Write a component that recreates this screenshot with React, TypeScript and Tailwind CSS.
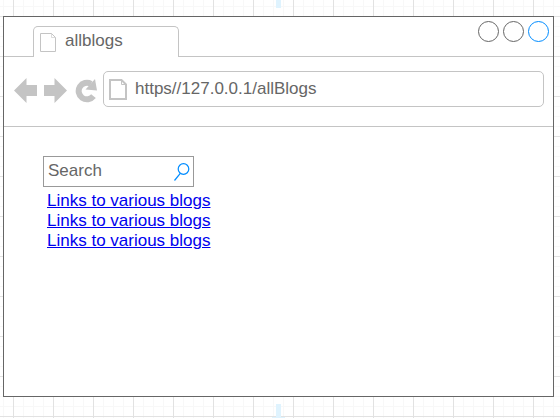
import React from "react";

const GRID =
  "bg-white bg-[linear-gradient(to_right,#e2e2e2_1px,transparent_1px),linear-gradient(to_bottom,#e2e2e2_1px,transparent_1px),linear-gradient(to_right,#f8f8f8_1px,transparent_1px),linear-gradient(to_bottom,#f8f8f8_1px,transparent_1px)] bg-[size:40px_40px,40px_40px,10px_10px,10px_10px] bg-[position:13px_16px,13px_16px,3px_6px,3px_6px]";

function PageIcon({ className, bold }: { className: string; bold?: boolean }) {
  return bold ? (
    <svg className={className} viewBox="0 0 18 21" fill="none" stroke="#c4c4c4" aria-hidden="true">
      <path d="M1 1H12.500L17 5.500V20H1Z" strokeWidth="2" />
      <path d="M12.500 1V5.500H17" strokeWidth="1" />
    </svg>
  ) : (
    <svg className={className} viewBox="0 0 16 20" fill="none" stroke="#c4c4c4" aria-hidden="true">
      <path d="M0.500 0.500H11.500L15.500 4.500V18.500H0.500Z" />
      <path d="M11.500 0.500V4.500H15.500" strokeOpacity="0.600" />
    </svg>
  );
}

function Tab() {
  return (
    <div className="mt-[9px] flex h-[31px] w-[146px] shrink-0 items-start rounded-t-[5px] border border-b-0 border-[#c4c4c4] pl-1.5">
      <PageIcon className="mt-1.5 h-5 w-4" />
      <span className="ml-[9px] mt-1 leading-5">allblogs</span>
    </div>
  );
}

function WindowButtons() {
  return (
    <div className="flex gap-1 pt-1">
      <button aria-label="Minimize" className="size-[21px] rounded-full border border-[#666]" />
      <button aria-label="Maximize" className="size-[21px] rounded-full border border-[#666]" />
      <button aria-label="Close" className="size-[21px] rounded-full border border-[#008cff]" />
    </div>
  );
}

function Toolbar() {
  return (
    <div className="flex h-[70px] items-start border-b border-[#c4c4c4] pl-2.5 pr-[9px] pt-3.5">
      <div className="mt-[7px] flex">
        <button aria-label="Back" className="mr-[7px]">
          <svg className="h-[25px] w-[23px]" viewBox="0 0 23 25" fill="#c4c4c4">
            <path d="M0 12.5L12.500 0V7H23V18H12.500V25Z" />
          </svg>
        </button>
        <button aria-label="Forward" className="mr-2">
          <svg className="h-[25px] w-[23px]" viewBox="0 0 23 25" fill="#c4c4c4">
            <path d="M23 12.5L10.500 0V7H0V18H10.500V25Z" />
          </svg>
        </button>
        <button aria-label="Reload" className="mr-1.5">
          <svg className="h-[25px] w-[22px]" viewBox="0 0 22 25">
            <path d="M18.500 18.200A8.300 8.300 0 1 1 16 5.800" fill="none" stroke="#c4c4c4" strokeWidth="6" />
            <path d="M20 1L22 12.500L10.500 11.500Z" fill="#c4c4c4" />
          </svg>
        </button>
      </div>
      <div className="flex h-9 min-w-0 flex-1 items-start rounded-[5px] border border-[#c4c4c4] pl-[5px]">
        <PageIcon bold className="mt-[7px] h-[21px] w-[18px] shrink-0" />
        <input
          aria-label="Address"
          defaultValue="https//127.0.0.1/allBlogs"
          className="ml-2 mt-[7px] h-5 min-w-0 flex-1 bg-transparent leading-5 outline-none"
        />
      </div>
    </div>
  );
}

function SearchBox() {
  return (
    <div className="flex h-[31px] w-[151px] items-start border border-[#999] pl-1 pr-[3px]">
      <input
        type="text"
        aria-label="Search"
        placeholder="Search"
        className="mt-1 h-5 min-w-0 flex-1 bg-transparent leading-5 outline-none placeholder:text-[#666]"
      />
      <button aria-label="Submit search" className="mt-1.5">
        <svg className="h-[18px] w-4" viewBox="0 0 16 18" fill="none" stroke="#008cff" strokeWidth="1.200">
          <circle cx="9.500" cy="6" r="5.300" />
          <path d="M6.300 10.300L0.500 17.500" />
        </svg>
      </button>
    </div>
  );
}

const LINKS = ["Links to various blogs", "Links to various blogs", "Links to various blogs"];

export default function App() {
  return (
    <div
      className={`relative flex min-h-screen flex-col pb-[21px] pl-[3px] pr-1.5 pt-4 font-['Liberation_Sans',Arial,sans-serif] text-[17px] text-[#666] ${GRID}`}
    >
      <svg className="absolute left-1/2 top-0 h-2 w-3.5 -translate-x-[9px]" viewBox="0 0 14 8" fill="#dff3fe" aria-hidden="true">
        <path d="M5 0H10V8H5Z" />
      </svg>
      <svg className="absolute bottom-0 left-1/2 h-3.5 w-3.5 -translate-x-[9px]" viewBox="0 0 14 14" fill="#dff3fe" aria-hidden="true">
        <path d="M5 0H10V13H14V14H1V13H5Z" />
      </svg>
      <main className="flex flex-1 flex-col border border-[#666] bg-white">
        <header className="flex h-10">
          <div className="w-[29px] shrink-0 border-b border-[#c4c4c4]" />
          <Tab />
          <div className="flex flex-1 justify-end border-b border-[#c4c4c4] pr-1">
            <WindowButtons />
          </div>
        </header>
        <Toolbar />
        <section className="px-[39px] pt-[29px]">
          <SearchBox />
          <ul className="pl-1 pt-1">
            {LINKS.map((text, i) => (
              <li key={i} className="leading-5">
                <a href="#blogs" className="text-[#0000ee] underline">
                  {text}
                </a>
              </li>
            ))}
          </ul>
        </section>
      </main>
    </div>
  );
}
